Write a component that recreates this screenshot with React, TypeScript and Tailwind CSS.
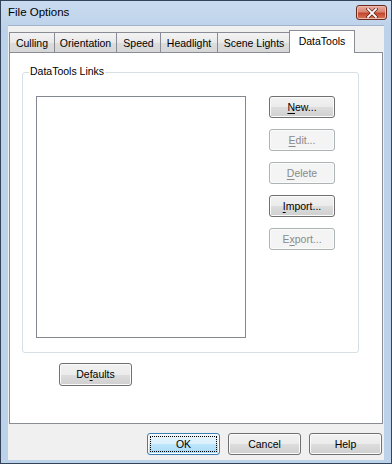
import type { ReactNode } from 'react'

const font = { fontFamily: '"Liberation Sans", Arial, sans-serif' }

type BtnProps = {
  children: ReactNode
  disabled?: boolean
  isDefault?: boolean
  className?: string
}

function Btn({ children, disabled, isDefault, className = '' }: BtnProps) {
  const look = disabled
    ? 'border-[#adb2b5] bg-[#f4f4f4] text-[#8a8a8a]'
    : isDefault
      ? 'border-[#3c7fb1] bg-[linear-gradient(#eaf6fd_0%,#d9f0fc_50%,#bee6fd_51%,#a7d9f5_100%)] text-black'
      : 'border-[#707070] bg-[linear-gradient(#f2f2f2_0%,#ebebeb_50%,#dddddd_51%,#cfcfcf_100%)] text-black'

  return (
    <button
      type="button"
      className={`relative flex items-center justify-center rounded-[3px] border text-[10.5px] leading-none shadow-[inset_0_0_0_1px_#fbfbfb] ${look} ${className}`}
    >
      {isDefault && <span className="absolute inset-[2px] border border-dotted border-black" />}
      <span className="relative">{children}</span>
    </button>
  )
}

function U({ children }: { children: ReactNode }) {
  return <span className="underline underline-offset-[2px]">{children}</span>
}

const tabs = [
  { label: 'Culling', w: 'w-[46px]' },
  { label: 'Orientation', w: 'w-[63px]' },
  { label: 'Speed', w: 'w-[45px]' },
  { label: 'Headlight', w: 'w-[58px]' },
  { label: 'Scene Lights', w: 'w-[74px]' },
]

export default function App() {
  return (
    <div
      style={font}
      className="flex h-[464px] w-[392px] flex-col border border-[#33435a] bg-[linear-gradient(#c9dbef,#bcd2ea_30px,#bcd2ea)] text-black"
    >
      {/* title bar */}
      <div className="flex h-[24px] items-start justify-between pl-[7px] pr-[4px]">
        <span className="mt-[6px] text-[11.5px] leading-none text-black">File Options</span>
        <button
          type="button"
          className="mt-[4px] flex h-[15px] w-[31px] items-center justify-center rounded-[3px] border border-[#6b2a1e] bg-[linear-gradient(#e9a99d_0%,#d98876_45%,#c4442c_55%,#d57a5c_100%)] shadow-[inset_0_0_0_1px_#f0b9ad]"
        >
          <svg width="12" height="10" viewBox="0 0 12 10">
            <path d="M2 1 L10 9 M10 1 L2 9" stroke="#5a1f16" strokeWidth="3.2" strokeLinecap="square" />
            <path d="M2 1 L10 9 M10 1 L2 9" stroke="#ffffff" strokeWidth="1.8" strokeLinecap="square" />
          </svg>
        </button>
      </div>

      {/* client area */}
      <div className="mb-[3px] ml-[7px] mr-[7px] flex flex-1 flex-col border-t border-[#9fb4cc] bg-[#f0f0f0] pl-[1px] pr-[1px]">
        {/* tab strip */}
        <div className="relative z-10 mt-[4px] flex h-[22px] items-end">
          {tabs.map((t, i) => (
            <div
              key={t.label}
              className={`${t.w} ${i > 0 ? '-ml-[1px]' : ''} flex h-[20px] items-center justify-center border border-b-0 border-[#898c95] bg-[linear-gradient(#f3f3f3,#e9e9e9_50%,#dcdcdc_51%,#d7d7d7)] pt-[1px] text-[10.5px] leading-none`}
            >
              {t.label}
            </div>
          ))}
          <div className="-mb-[1px] -ml-[2px] flex h-[23px] w-[66px] items-center justify-center border border-b-0 border-[#898c95] bg-white pb-[1px] text-[10.5px] leading-none">
            DataTools
          </div>
        </div>

        {/* tab panel */}
        <div className="h-[372px] border border-[#898c95] bg-white pl-[12px] pt-[19px]">
          <div className="relative h-[281px] w-[337px] rounded-[3px] border border-[#d5dfe5]">
            <span className="absolute -top-[7px] left-[6px] bg-white px-[1px] text-[10.5px] leading-none">
              DataTools Links
            </span>
            <div className="ml-[13px] mt-[23px] flex">
              <div className="h-[242px] w-[210px] border border-[#828790] bg-white" />
              <div className="ml-[23px] flex flex-col gap-[11px]">
                <Btn className="h-[22px] w-[66px]">
                  <U>N</U>ew...
                </Btn>
                <Btn disabled className="h-[22px] w-[66px]">
                  <U>E</U>dit...
                </Btn>
                <Btn disabled className="h-[22px] w-[66px]">
                  <U>D</U>elete
                </Btn>
                <Btn className="h-[22px] w-[66px]">
                  <U>I</U>mport...
                </Btn>
                <Btn disabled className="h-[22px] w-[66px]">
                  E<U>x</U>port...
                </Btn>
              </div>
            </div>
          </div>
          <Btn className="ml-[37px] mt-[10px] h-[23px] w-[73px]">
            De<U>f</U>aults
          </Btn>
        </div>

        {/* dialog buttons */}
        <div className="mt-[9px] flex justify-end gap-[8px] pr-[1px]">
          <Btn isDefault className="h-[22px] w-[73px]">
            OK
          </Btn>
          <Btn className="h-[22px] w-[73px]">Cancel</Btn>
          <Btn className="h-[22px] w-[73px]">Help</Btn>
        </div>
      </div>
    </div>
  )
}
